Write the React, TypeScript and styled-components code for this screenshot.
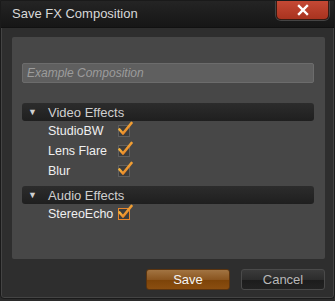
import styled, { createGlobalStyle } from "styled-components";

const Global = createGlobalStyle`
  html, body {
    margin: 0;
    padding: 0;
    background: #2b2b2b;
  }
  body {
    font-family: "Liberation Sans", Arial, sans-serif;
  }
`;

type Effect = { name: string; focused?: boolean };

const groups: { title: string; items: Effect[] }[] = [
  { title: "Video Effects", items: [{ name: "StudioBW" }, { name: "Lens Flare" }, { name: "Blur" }] },
  { title: "Audio Effects", items: [{ name: "StereoEcho", focused: true }] },
];

function Check({ focused }: { focused?: boolean }) {
  return (
    <CheckBox $focused={focused}>
      <svg width="16" height="16" viewBox="0 0 16 16">
        <defs>
          <linearGradient id="chk" x1="0" y1="0" x2="1" y2="1">
            <stop offset="0" stopColor="#ffd24a" />
            <stop offset="1" stopColor="#e06a1c" />
          </linearGradient>
        </defs>
        <path d="M2.5 8.5 L6 12.5 L14.5 2" fill="none" stroke="url(#chk)" strokeWidth="2.6" strokeLinecap="round" strokeLinejoin="round" />
      </svg>
    </CheckBox>
  );
}

export default function App() {
  return (
    <>
      <Global />
      <Window>
        <TitleBar>
          <Title>Save FX Composition</Title>
          <CloseButton>
            <svg width="12" height="12" viewBox="0 0 12 12">
              <path d="M2 2 L10 10 M10 2 L2 10" stroke="#fff" strokeWidth="2.4" strokeLinecap="square" />
            </svg>
          </CloseButton>
        </TitleBar>
        <Body>
          <Panel>
            <NameInput placeholder="Example Composition" />
            <Groups>
              {groups.map((g) => (
                <Group key={g.title}>
                  <GroupHeader>
                    <Arrow>▼</Arrow>
                    {g.title}
                  </GroupHeader>
                  {g.items.map((it) => (
                    <Row key={it.name}>
                      <RowLabel>{it.name}</RowLabel>
                      <Check focused={it.focused} />
                    </Row>
                  ))}
                </Group>
              ))}
            </Groups>
          </Panel>
          <Footer>
            <Button $primary>Save</Button>
            <Button>Cancel</Button>
          </Footer>
        </Body>
      </Window>
    </>
  );
}

const Window = styled.div`
  width: 335px;
  height: 299px;
  box-sizing: border-box;
  display: flex;
  flex-direction: column;
  background: #2e2e2e;
  border: 1px solid #1a1a1a;
  border-radius: 0 0 4px 4px;
  box-shadow: inset 1px 0 0 #444, inset -1px 0 0 #444, inset 0 -1px 0 #444;
  overflow: hidden;
`;

const TitleBar = styled.div`
  height: 26px;
  flex: none;
  display: flex;
  align-items: flex-start;
  justify-content: space-between;
  background: linear-gradient(#242424, #161616);
  border-bottom: 1px solid #111;
`;

const Title = styled.div`
  color: #d8d8d8;
  font-size: 13px;
  line-height: 26px;
  padding-left: 11px;
`;

const CloseButton = styled.div`
  width: 51px;
  height: 19px;
  margin: -1px 5px 0 0;
  display: flex;
  align-items: center;
  justify-content: center;
  background: linear-gradient(#c64a36, #a9331f);
  border: 1px solid #3a1a12;
  border-top: none;
  border-radius: 0 0 5px 5px;
  box-shadow: 0 0 0 1px #444;
`;

const Body = styled.div`
  flex: 1;
  display: flex;
  flex-direction: column;
  padding: 9px 9px 0 11px;
`;

const Panel = styled.div`
  height: 222px;
  box-sizing: border-box;
  background: #474747;
  border-radius: 2px;
  padding: 26px 11px 0 10px;
  display: flex;
  flex-direction: column;
`;

const NameInput = styled.input`
  height: 20px;
  box-sizing: border-box;
  background: #5f5f5f;
  border: 1px solid #6c6c6c;
  border-radius: 2px;
  padding: 0 4px;
  font-family: "Liberation Sans", Arial, sans-serif;
  font-size: 12px;
  font-style: italic;
  outline: none;
  &::placeholder {
    color: #9c9c9c;
  }
`;

const Groups = styled.div`
  margin-top: 20px;
  display: flex;
  flex-direction: column;
  gap: 5px;
`;

const Group = styled.div`
  display: flex;
  flex-direction: column;
`;

const GroupHeader = styled.div`
  height: 18px;
  display: flex;
  align-items: center;
  background: linear-gradient(#2c2c2c, #1f1f1f);
  border-radius: 3px;
  color: #cfcfcf;
  font-size: 13px;
`;

const Arrow = styled.span`
  width: 26px;
  padding-left: 6px;
  box-sizing: border-box;
  font-size: 9px;
  color: #d0d0d0;
`;

const Row = styled.div`
  height: 20px;
  display: flex;
  align-items: center;
  padding-left: 26px;
`;

const RowLabel = styled.span`
  width: 70px;
  color: #f0f0f0;
  font-size: 12.5px;
`;

const CheckBox = styled.div<{ $focused?: boolean }>`
  position: relative;
  width: 12px;
  height: 12px;
  box-sizing: border-box;
  background: #3c3c3c;
  border: 1px solid ${(p) => (p.$focused ? "#e8862a" : "#5e5e5e")};
  svg {
    position: absolute;
    left: -2px;
    top: -5px;
  }
`;

const Footer = styled.div`
  flex: 1;
  display: flex;
  justify-content: flex-end;
  align-items: flex-start;
  gap: 11px;
  padding-top: 10px;
`;

const Button = styled.div<{ $primary?: boolean }>`
  width: 84px;
  height: 21px;
  box-sizing: border-box;
  display: flex;
  align-items: center;
  justify-content: center;
  font-size: 13px;
  border-radius: 3px;
  color: ${(p) => (p.$primary ? "#f4f4f4" : "#b8b8b8")};
  border: 1px solid ${(p) => (p.$primary ? "#5a3410" : "#4a4a4a")};
  background: ${(p) =>
    p.$primary
      ? "linear-gradient(#a27442, #8a5520 50%, #7c4308 51%, #8a4e10)"
      : "linear-gradient(#3a3a3a, #2c2c2c 50%, #1c1c1c 51%, #222)"};
`;
